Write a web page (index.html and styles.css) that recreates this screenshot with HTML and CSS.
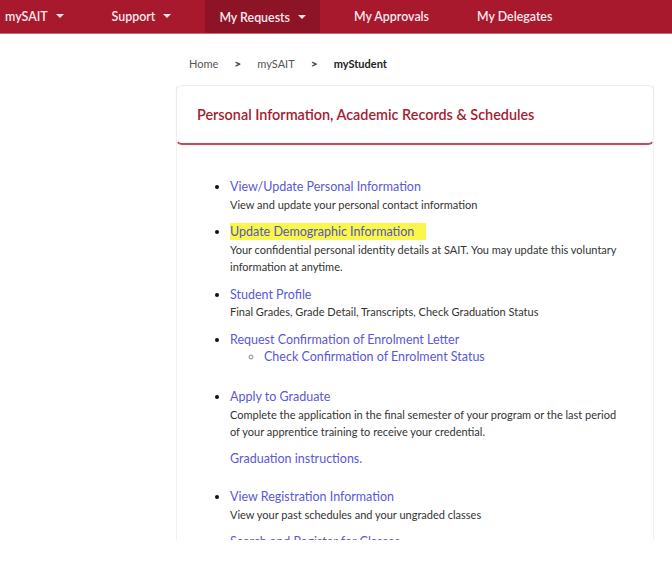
FILE: index.html
```html
<!DOCTYPE html>
<html lang="en">
	<head>
		<meta charset="UTF-8" />
		<meta name="viewport" content="width=device-width, initial-scale=1.0" />
		<title>mySAIT - myStudent</title>
		<link rel="stylesheet" href="styles.css">
	</head>
	<body>
		<div class="page">
			<nav class="top-nav">
				<a class="nav-item">mySAIT <span class="caret"></span></a>
				<a class="nav-item">Support <span class="caret"></span></a>
				<a class="nav-item active">My Requests <span class="caret"></span></a>
				<a class="nav-item">My Approvals</a>
				<a class="nav-item">My Delegates</a>
			</nav>

			<main class="main">
				<div class="breadcrumb">
					<span class="crumb">Home</span>
					<span class="sep">&gt;</span>
					<span class="crumb">mySAIT</span>
					<span class="sep">&gt;</span>
					<span class="crumb current">myStudent</span>
				</div>

				<section class="panel">
					<header class="panel-header">
						<h1>Personal Information, Academic Records &amp; Schedules</h1>
					</header>
					<div class="panel-body">
						<ul class="links">
							<li>
								<a class="link">View/Update Personal Information</a>
								<div class="desc">View and update your personal contact information</div>
							</li>
							<li>
								<a class="link"><mark>Update Demographic Information</mark></a>
								<div class="desc">Your confidential personal identity details at SAIT. You may update this voluntary<br>information at anytime.</div>
							</li>
							<li>
								<a class="link">Student Profile</a>
								<div class="desc">Final Grades, Grade Detail, Transcripts, Check Graduation Status</div>
							</li>
							<li>
								<a class="link">Request Confirmation of Enrolment Letter</a>
								<ul class="sub-links">
									<li><a class="link">Check Confirmation of Enrolment Status</a></li>
								</ul>
							</li>
							<li>
								<a class="link">Apply to Graduate</a>
								<div class="desc">Complete the application in the final semester of your program or the last period<br>of your apprentice training to receive your credential.</div>
								<p class="extra"><a class="link">Graduation instructions.</a></p>
							</li>
							<li>
								<a class="link">View Registration Information</a>
								<div class="desc">View your past schedules and your ungraded classes</div>
							</li>
							<li>
								<a class="link">Search and Register for Classes</a>
							</li>
						</ul>
					</div>
				</section>
			</main>
		</div>
	</body>
</html>
```

FILE: styles.css
```css
body {
	margin: 0;
	background: #fff;
	font-family: Lato, "Open Sans", Arial, sans-serif;
	color: #333;
}
.page {
	height: 540px;
	overflow: hidden;
}

/* top navigation */
.top-nav {
	display: flex;
	align-items: stretch;
	gap: 20px;
	height: 31px;
	padding-bottom: 2px;
	margin-left: -9px;
	background: #a8192e;
	border-bottom: 1px solid #d26a78;
}
.nav-item {
	display: flex;
	align-items: center;
	gap: 6px;
	padding: 1px 14px 0;
	color: #fbe8ec;
	font-size: 12.4px;
	font-weight: 600;
	text-decoration: none;
}
.nav-item.active {
	background: #8d1426;
	margin-bottom: -2px;
}
.caret {
	width: 0;
	height: 0;
	border-left: 4px solid transparent;
	border-right: 4px solid transparent;
	border-top: 4px solid #fbe8ec;
	margin-left: 2px;
}

/* main column */
.main {
	width: 478px;
	margin-left: 176px;
}
.breadcrumb {
	display: flex;
	align-items: center;
	gap: 11px;
	padding: 20px 0 0 13px;
	height: 18px;
	font-size: 11px;
	color: #555;
}
.breadcrumb .sep {
	margin: 0 5px;
	font-weight: 900;
	font-size: 12px;
	color: #444;
}
.breadcrumb .current {
	font-weight: 700;
	color: #222;
}

.panel {
	margin-top: 13px;
	border-left: 1px solid #f1f1f1;
	border-right: 1px solid #f1f1f1;
}
.panel-header {
	height: 57px;
	display: flex;
	align-items: center;
	padding-left: 20px;
	border: 1px solid #ececec;
	border-bottom: 2px solid #c54a5d;
	border-radius: 6px;
	box-shadow: 0 1px 2px rgba(0, 0, 0, 0.06);
	margin: 0 -1px;
}
.panel-header h1 {
	margin: 0;
	font-size: 14.4px;
	font-weight: 600;
	color: #a51c31;
}

.panel-body {
	padding-top: 33px;
}
.links {
	margin: 0;
	padding-left: 53px;
	list-style: disc;
	font-size: 12.5px;
	line-height: 17.5px;
}
.links > li {
	margin-bottom: 10px;
}
.links li::marker {
	color: #111;
}
.link {
	color: #5a58d8;
	text-decoration: none;
}
mark {
	background: #fbf64a;
	color: #4f5ab8;
	padding: 1px 12px 1px 0;
}
.desc {
	color: #333;
	font-size: 11px;
}
/* bottom margins collapse with the item margin, so they carry the full gap */
.sub-links {
	margin: 0 0 22.5px 0;
	padding-left: 34px;
	list-style: circle;
}
.sub-links li::marker {
	color: #888;
}
.extra {
	margin: 9.5px 0 20.5px 0;
}
```
